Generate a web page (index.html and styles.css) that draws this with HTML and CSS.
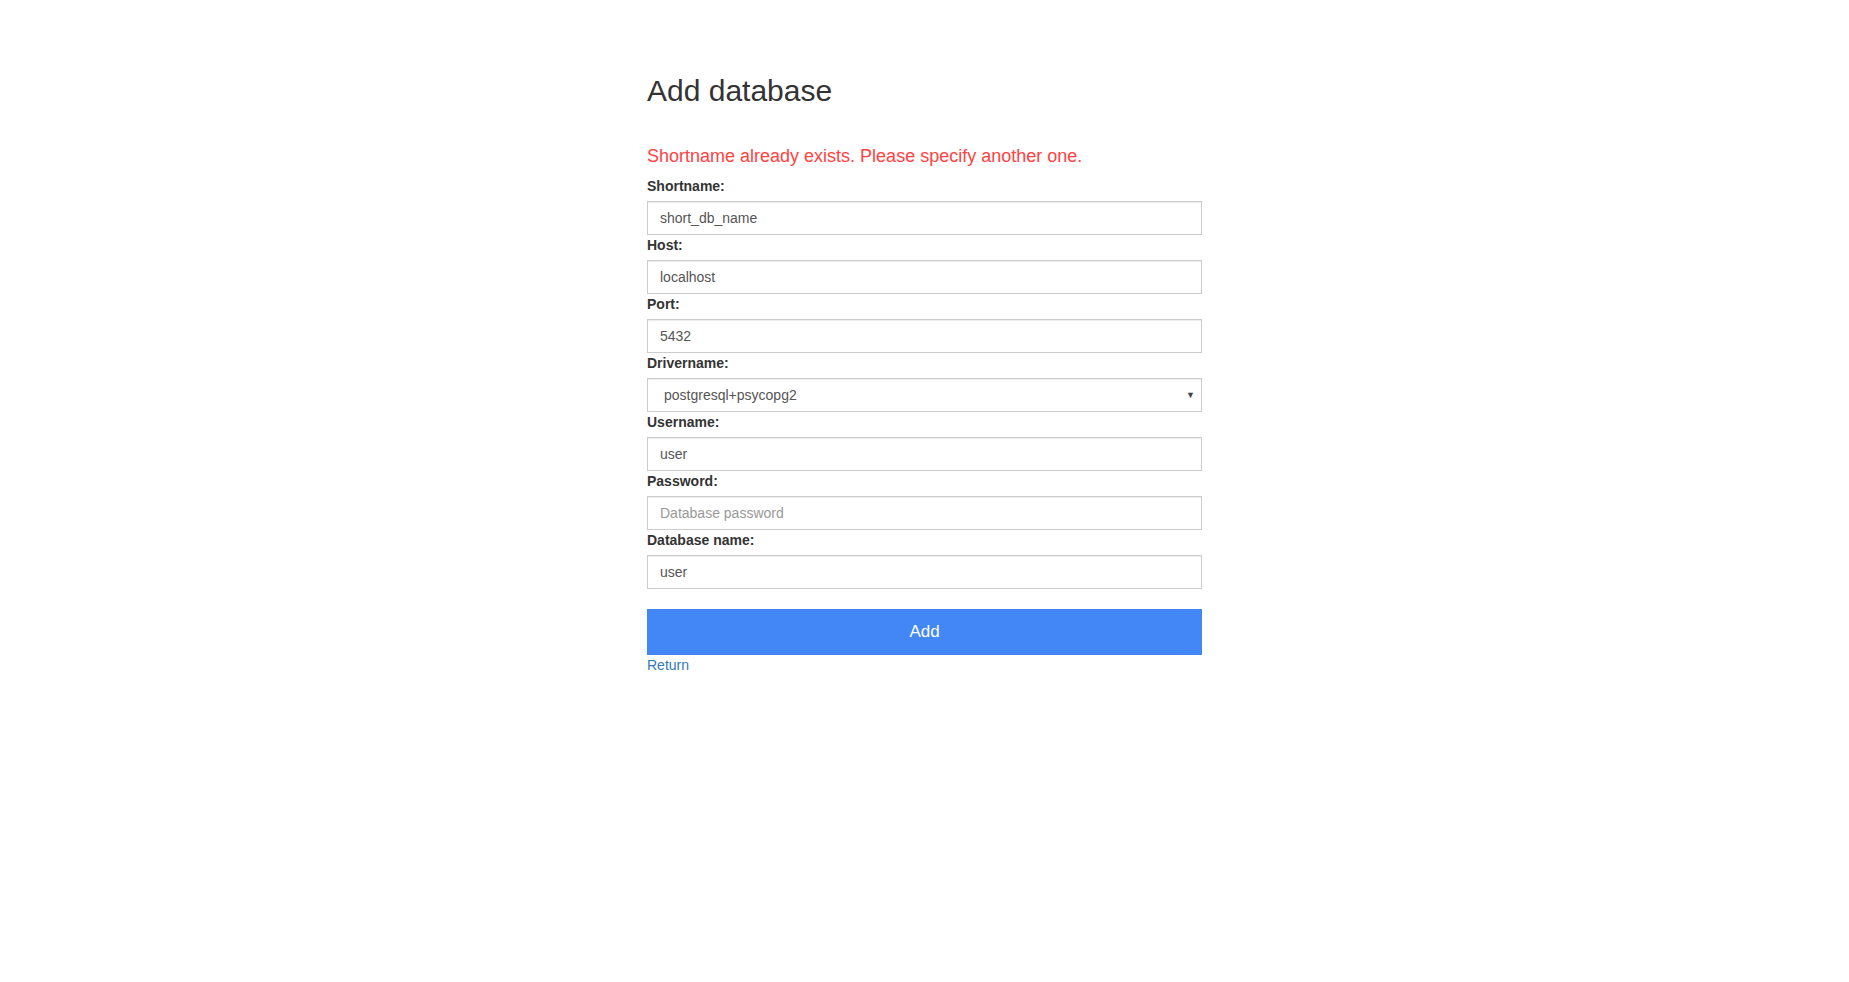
FILE: index.html
```html
<!DOCTYPE html>
<html lang="en">
<head>
<meta charset="utf-8">
<title>Add database</title>
<link rel="stylesheet" href="styles.css">
</head>
<body>
<main class="page">
  <h1 class="title">Add database</h1>
  <p class="error">Shortname already exists. Please specify another one.</p>
  <form class="form">
    <label class="label" for="shortname">Shortname:</label>
    <input class="field" id="shortname" type="text" value="short_db_name">
    <label class="label" for="host">Host:</label>
    <input class="field" id="host" type="text" value="localhost">
    <label class="label" for="port">Port:</label>
    <input class="field" id="port" type="text" value="5432">
    <label class="label" for="drivername">Drivername:</label>
    <div class="select-wrap">
      <select class="field select" id="drivername">
        <option>postgresql+psycopg2</option>
      </select>
      <span class="select-arrow">▼</span>
    </div>
    <label class="label" for="username">Username:</label>
    <input class="field" id="username" type="text" value="user">
    <label class="label" for="password">Password:</label>
    <input class="field" id="password" type="password" placeholder="Database password">
    <label class="label" for="dbname">Database name:</label>
    <input class="field" id="dbname" type="text" value="user">
    <button class="btn" type="button">Add</button>
  </form>
  <a class="return" href="#">Return</a>
</main>
</body>
</html>
```
FILE: styles.css
```css
* { box-sizing: border-box; }
html, body { margin: 0; padding: 0; background: #fff; }
body {
  font-family: "Liberation Sans", Arial, sans-serif;
  font-size: 14px;
  line-height: 20px;
  color: #333;
}
.page {
  width: 555px;
  margin: 0 auto;
  padding-top: 74px;
}
.title {
  margin: 0;
  font-size: 30px;
  line-height: 33px;
  font-weight: 500;
  color: #333;
}
.error {
  margin: 39px 0 0;
  font-size: 18px;
  line-height: 20px;
  color: #ff4242;
}
.form {
  display: flex;
  flex-direction: column;
  margin-top: 10px;
}
.label {
  display: block;
  font-weight: bold;
  font-size: 14px;
  line-height: 20px;
  margin-bottom: 5px;
  color: #333;
}
.field {
  display: block;
  width: 100%;
  height: 34px;
  margin: 0;
  padding: 6px 12px;
  font-family: "Liberation Sans", Arial, sans-serif;
  font-size: 14px;
  line-height: 20px;
  color: #555;
  background: #fff;
  border: 1px solid #ccc;
  border-radius: 0;
  box-shadow: inset 0 1px 1px rgba(0,0,0,.075);
  outline: none;
}
.field::placeholder { color: #999; }
.select-wrap { position: relative; }
.select {
  -webkit-appearance: none;
  appearance: none;
  padding-left: 16px;
}
.select-arrow {
  position: absolute;
  right: 7px;
  top: 12px;
  font-size: 9px;
  line-height: 10px;
  color: #444;
  pointer-events: none;
}
.btn {
  display: block;
  width: 100%;
  height: 46px;
  margin-top: 20px;
  padding: 0;
  border: 0;
  border-radius: 0;
  background: #4287f5;
  color: #fff;
  font-family: "Liberation Sans", Arial, sans-serif;
  font-size: 17px;
  cursor: pointer;
}
.return {
  display: inline-block;
  font-size: 14px;
  line-height: 20px;
  color: #337ab7;
  text-decoration: none;
}
```
